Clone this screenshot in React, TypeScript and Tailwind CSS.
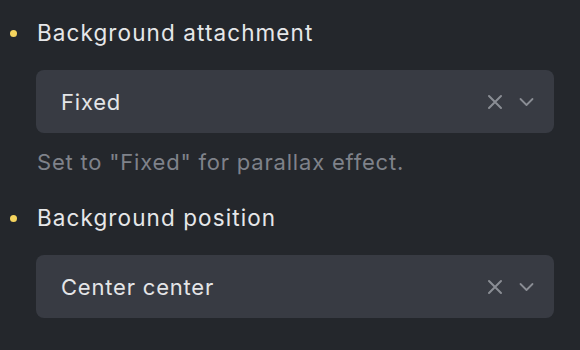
import React from "react";

function Select({ value }: { value: string }) {
  return (
    <div className="ml-[36px] mr-[26px] h-[63px] rounded-[8px] bg-[#383b43] flex items-center pl-[25px] pr-[20px]">
      <span className="flex-1 text-[22px] tracking-[0.8px] text-[#e4e5e7] leading-none">{value}</span>
      <svg width="16" height="16" viewBox="0 0 16 16" className="mr-[16px]" fill="none" stroke="#8a8d94" strokeWidth="2" strokeLinecap="round">
        <path d="M2 2 L14 14 M14 2 L2 14" />
      </svg>
      <svg width="15" height="16" viewBox="0 0 15 16" fill="none" stroke="#8a8d94" strokeWidth="1.8" strokeLinecap="round" strokeLinejoin="round">
        <path d="M1.5 5 L7.5 11 L13.5 5" />
      </svg>
    </div>
  );
}

function Label({ text }: { text: string }) {
  return (
    <div className="flex items-center h-[30px]">
      <div className="w-[37px] flex justify-center pr-[3px]">
        <div className="w-[7px] h-[7px] rounded-full bg-[#f5d45e] ml-[-7px]" />
      </div>
      <span className="text-[22.5px] tracking-[1.1px] text-[#e6e7e9] leading-none">{text}</span>
    </div>
  );
}

export default function App() {
  return (
    <div
      className="w-[580px] h-[350px] overflow-hidden bg-[#24272c] pt-[18px]"
      style={{ fontFamily: "Inter, 'Noto Sans', sans-serif" }}
    >
      <Label text="Background attachment" />
      <div className="mt-[22px]">
        <Select value="Fixed" />
      </div>
      <div className="mt-[14px] h-[30px] flex items-center pl-[37px] text-[22px] tracking-[0.8px] text-[#7f828a] leading-none">
        Set to "Fixed" for parallax effect.
      </div>
      <div className="mt-[26px]">
        <Label text="Background position" />
      </div>
      <div className="mt-[22px]">
        <Select value="Center center" />
      </div>
      <div className="mt-[26px]">
        <div className="flex items-center h-[30px] pl-[37px]">
          <span className="text-[22.5px] tracking-[1.1px] text-[#e6e7e9] leading-none">Background repeat</span>
        </div>
      </div>
    </div>
  );
}
